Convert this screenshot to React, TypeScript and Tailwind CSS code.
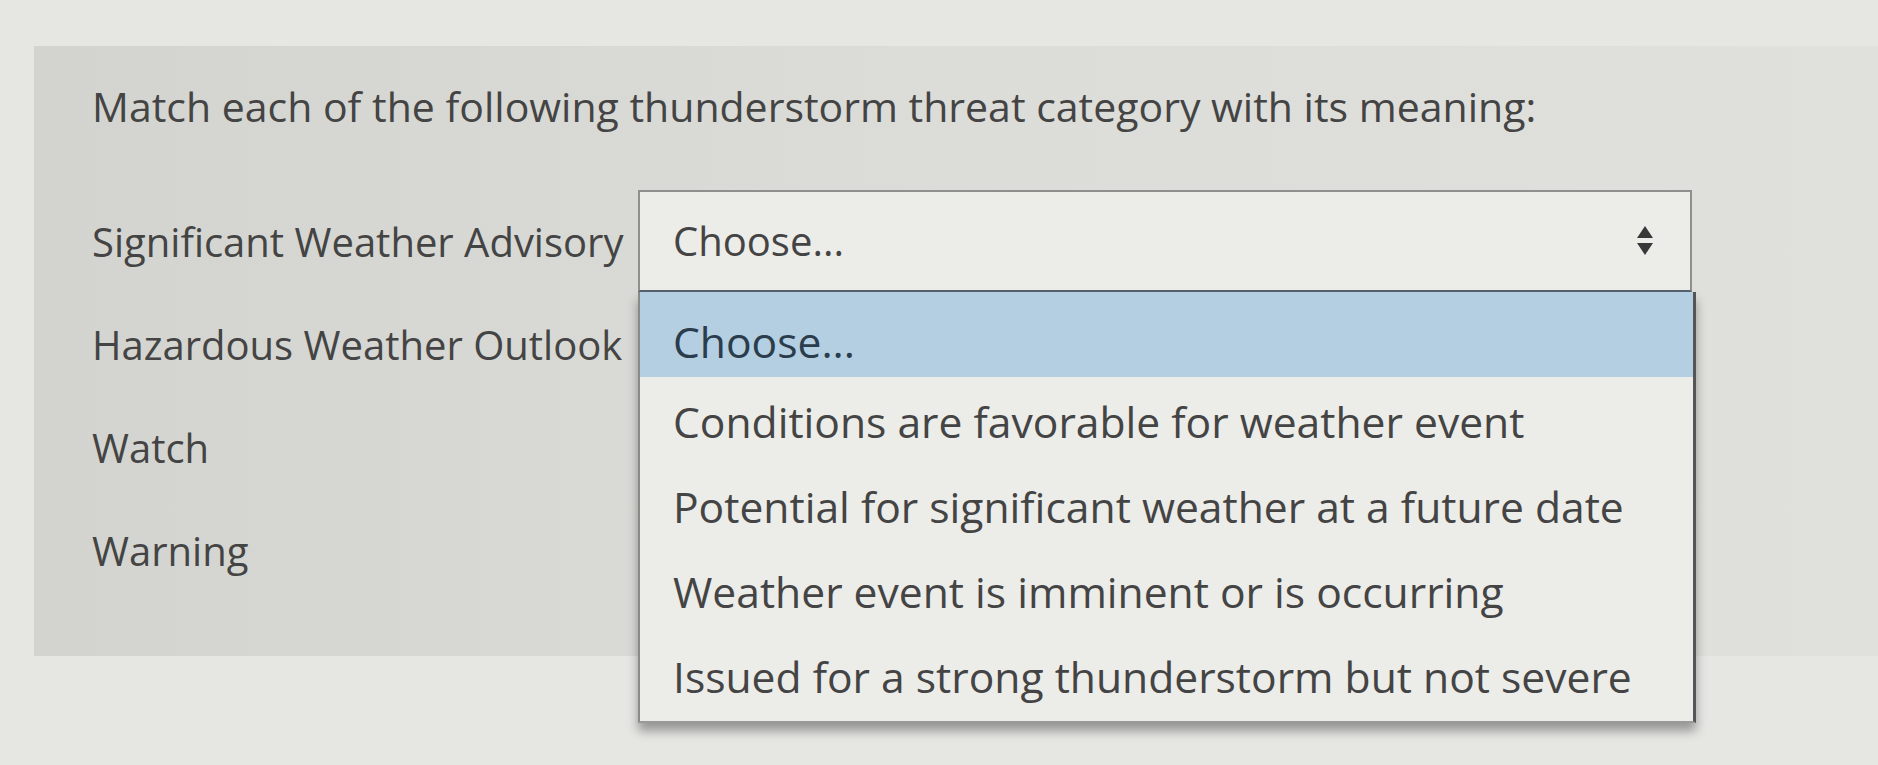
import { useState } from 'react'

const categories = [
  'Significant Weather Advisory',
  'Hazardous Weather Outlook',
  'Watch',
  'Warning',
]

const meanings = [
  'Choose...',
  'Conditions are favorable for weather event',
  'Potential for significant weather at a future date',
  'Weather event is imminent or is occurring',
  'Issued for a strong thunderstorm but not severe',
]

function SortArrows() {
  return (
    <svg width="18" height="32" viewBox="0 0 18 32" className="shrink-0">
      <path d="M9 1 L17 13 L1 13 Z" fill="#383838" />
      <path d="M1 18 L17 18 L9 30 Z" fill="#383838" />
    </svg>
  )
}

function MatchSelect({ open, active }: { open: boolean; active: number }) {
  return (
    <div className="relative">
      <div
        className={
          'flex h-[102px] w-[1054px] items-center justify-between border-2 bg-[#ecece9] pl-[33px] pr-[36px] ' +
          (open ? 'border-[#8f8f8d] border-b-[#56636e]' : 'border-[#8f8f8d]')
        }
      >
        {open && <span className="text-[40px] text-[#444]">Choose...</span>}
        <SortArrows />
      </div>

      {open && (
        <ul className="absolute left-0 top-full z-10 w-[1058px] border-l-2 border-r-[3px] border-b-2 border-l-[#8a8a88] border-r-[#555] border-b-[#9a9a98] bg-[#ecece9] pb-[4px] shadow-[0_8px_10px_rgba(0,0,0,0.35)]">
          {meanings.map((m, i) => (
            <li
              key={m}
              className={
                'flex h-[85px] items-center pl-[33px] text-[42.6px] ' +
                (i === active ? 'bg-[#b3cfe1] pt-[15px] text-[#2b3c4c]' : 'pt-[4px] text-[#444]')
              }
            >
              {m}
            </li>
          ))}
        </ul>
      )}
    </div>
  )
}

export default function App() {
  const [openRow] = useState(0)

  return (
    <div className="min-h-screen w-full overflow-hidden bg-[#e6e6e3] pt-[46px] font-['Open_Sans',sans-serif]">
      <div className="ml-[34px] h-[610px] bg-gradient-to-r from-[#d3d4cf] via-[#dcdcd8] to-[#e0e0dd] pl-[58px] pt-[36px]">
        <p className="text-[41px] leading-[49px] text-[#444]">
          Match each of the following thunderstorm threat category with its meaning:
        </p>

        <div className="mt-[59px] grid grid-cols-[546px_1054px] auto-rows-[103px]">
          {categories.map((c, i) => (
            <div key={c} className="contents">
              <div className="flex items-center text-[40px] text-[#444]">{c}</div>
              <div className={i === openRow ? 'relative z-10' : ''}>
                <MatchSelect open={i === openRow} active={0} />
              </div>
            </div>
          ))}
        </div>
      </div>
    </div>
  )
}
